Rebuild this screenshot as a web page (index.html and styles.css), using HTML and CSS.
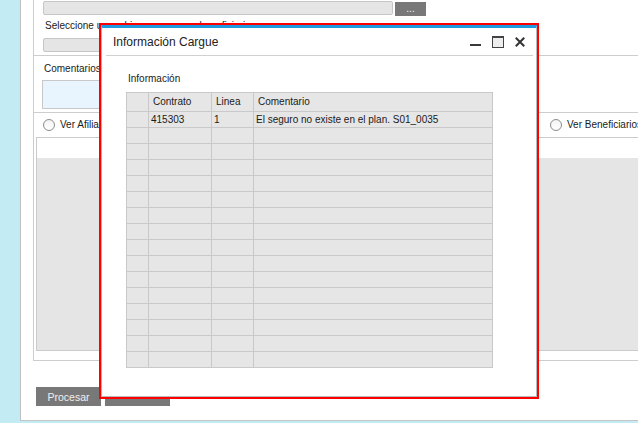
FILE: index.html
```html
<!DOCTYPE html>
<html lang="es">
<head>
<meta charset="utf-8">
<title>Información Cargue</title>
<link rel="stylesheet" href="styles.css">
</head>
<body>
<div class="desktop">
  <div class="window">
    <div class="panel">
      <div class="sec sec-file">
        <div class="file-row">
          <div class="field field-1"></div>
          <button class="btn-dots">...</button>
        </div>
        <div class="lbl lbl-sel">Seleccione un archivo para cargar beneficiarios:</div>
        <div class="field field-2"></div>
      </div>
      <div class="sec sec-com">
        <div class="lbl">Comentarios:</div>
        <div class="textarea"></div>
      </div>
      <div class="sec-radio">
        <label class="radio radio-first"><span class="dot"></span>Ver Afiliados</label>
        <label class="radio"><span class="dot"></span>Ver Beneficiarios</label>
      </div>
      <div class="grid-box">
        <div class="grid-head"></div>
        <div class="grid-body"></div>
      </div>
    </div>
    <div class="actions">
      <button class="btn">Procesar</button>
      <button class="btn" aria-label="Cancelar"></button>
    </div>
  </div>
</div>

<div class="dialog">
  <div class="dlg-title">
    <span class="dlg-title-text">Información Cargue</span>
    <div class="dlg-controls">
      <svg width="12" height="12" viewBox="0 0 12 12"><rect x="0" y="8" width="11" height="2" fill="#3a3a3a"/></svg>
      <svg width="12" height="12" viewBox="0 0 12 12"><rect x="0.5" y="0.5" width="11" height="11" fill="#eeeeee" stroke="#444"/><rect x="0" y="0" width="12" height="2" fill="#444"/></svg>
      <svg width="12" height="12" viewBox="0 0 12 12"><path d="M2.5 2.5 L9.5 9.5 M9.5 2.5 L2.5 9.5" stroke="#333" stroke-width="2" stroke-linecap="square"/></svg>
    </div>
  </div>
  <div class="dlg-sep"></div>
  <div class="dlg-body">
    <div class="dlg-label">Información</div>
    <div class="tbl">
      <div class="th"></div><div class="th">Contrato</div><div class="th">Linea</div><div class="th">Comentario</div>
      <div class="td"></div><div class="td">415303</div><div class="td">1</div><div class="td">El seguro no existe en el plan. S01_0035</div>
      <div class="td"></div><div class="td"></div><div class="td"></div><div class="td"></div>
      <div class="td"></div><div class="td"></div><div class="td"></div><div class="td"></div>
      <div class="td"></div><div class="td"></div><div class="td"></div><div class="td"></div>
      <div class="td"></div><div class="td"></div><div class="td"></div><div class="td"></div>
      <div class="td"></div><div class="td"></div><div class="td"></div><div class="td"></div>
      <div class="td"></div><div class="td"></div><div class="td"></div><div class="td"></div>
      <div class="td"></div><div class="td"></div><div class="td"></div><div class="td"></div>
      <div class="td"></div><div class="td"></div><div class="td"></div><div class="td"></div>
      <div class="td"></div><div class="td"></div><div class="td"></div><div class="td"></div>
      <div class="td"></div><div class="td"></div><div class="td"></div><div class="td"></div>
      <div class="td"></div><div class="td"></div><div class="td"></div><div class="td"></div>
      <div class="td"></div><div class="td"></div><div class="td"></div><div class="td"></div>
      <div class="td"></div><div class="td"></div><div class="td"></div><div class="td"></div>
      <div class="td"></div><div class="td"></div><div class="td"></div><div class="td"></div>
      <div class="td"></div><div class="td"></div><div class="td"></div><div class="td"></div>
    </div>
  </div>
</div>
</body>
</html>
```

FILE: styles.css
```css
* { box-sizing: border-box; }

html, body {
  margin: 0;
  padding: 0;
  width: 638px;
  height: 423px;
  overflow: hidden;
  background: #c2ebf3;
  font-family: "Liberation Sans", Arial, sans-serif;
  font-size: 10px;
  color: #1a1a1a;
}

.desktop {
  padding-left: 20px;
}

.window {
  width: 618px;
  height: 421px;
  background: #ffffff;
  border-left: 1px solid #bfbfbf;
  border-bottom: 1px solid #c4c4c4;
  overflow: hidden;
}

.panel {
  margin-left: 12px;
  width: 800px;
  height: 361px;
  border-left: 1px solid #cdcdcd;
  border-bottom: 1px solid #cdcdcd;
}

.sec {
  border-bottom: 1px solid #cdcdcd;
}

.sec-file {
  height: 56px;
  padding-left: 9px;
}

.file-row {
  display: flex;
  align-items: flex-start;
  height: 16px;
}

.field {
  height: 14px;
  background: #e5e5e5;
  border: 1px solid #c6c6c6;
  border-radius: 2px;
}

.field-1 {
  width: 350px;
  margin-top: 1px;
}

.btn-dots {
  margin: 2px 0 0 2px;
  width: 31px;
  height: 14px;
  padding: 0;
  border: none;
  background: #787878;
  color: #f2f2f2;
  font-family: inherit;
  font-size: 10px;
  line-height: 10px;
}

.lbl {
  line-height: 12px;
  height: 12px;
  white-space: nowrap;
}

.lbl-sel {
  margin-top: 4px;
  margin-left: 2px;
}

.field-2 {
  width: 350px;
  margin-top: 6px;
}

.sec-com {
  height: 57px;
  padding: 7px 0 0 10px;
}

.textarea {
  margin: 5px 0 0 -2px;
  width: 400px;
  height: 29px;
  background: #e9f5fe;
  border: 1px solid #c8c8c8;
}

.sec-radio {
  height: 24px;
  display: flex;
  align-items: center;
  padding-left: 9px;
}

.radio {
  display: flex;
  align-items: center;
  line-height: 12px;
  white-space: nowrap;
}

.radio-first {
  width: 507px;
}

.dot {
  width: 12px;
  height: 12px;
  border-radius: 50%;
  border: 1px solid #8c8c8c;
  background: linear-gradient(#f4f4f4, #ffffff);
  margin-right: 5px;
  flex: none;
}

.grid-box {
  margin-left: 2px;
  height: 214px;
  border: 1px solid #cbcbcb;
  display: flex;
  flex-direction: column;
}

.grid-head {
  height: 20px;
  background: #ffffff;
}

.grid-body {
  flex: 1;
  background: #e5e5e5;
}

.actions {
  display: flex;
  gap: 4px;
  margin: 26px 0 0 15px;
}

.btn {
  width: 65px;
  height: 19px;
  padding: 0;
  border: none;
  background: #787878;
  color: #f0f0f0;
  font-family: inherit;
  font-size: 10.5px;
}

/* Dialog overlay */
.dialog {
  position: absolute;
  left: 101px;
  top: 25px;
  width: 436px;
  height: 372px;
  background: #ffffff;
  border: 1px solid #b9b9b9;
  border-top: 3px solid #1d9ae0;
  outline: 2px solid #ff0000;
}

.dlg-title {
  height: 27px;
  display: flex;
  align-items: center;
  padding: 0 10px 0 11px;
}

.dlg-title-text {
  font-size: 12px;
  color: #222;
}

.dlg-controls {
  margin-left: auto;
  display: flex;
  gap: 10px;
  align-items: center;
}

.dlg-controls svg {
  display: block;
}

.dlg-sep {
  height: 1px;
  margin: 0 3px 0 4px;
  background: #d0d0d0;
}

.dlg-body {
  padding: 17px 0 0 24px;
}

.dlg-label {
  margin-left: 2px;
  line-height: 12px;
  height: 12px;
}

.tbl {
  margin-top: 7px;
  display: grid;
  grid-template-columns: 21px 62px 41px 238px;
  grid-template-rows: 18px repeat(16, 15px);
  gap: 1px;
  padding: 1px;
  width: 367px;
  background: #c9c9c9;
}

.th, .td {
  background: #e6e6e6;
  white-space: nowrap;
  overflow: hidden;
}

.th {
  line-height: 18px;
  padding-left: 4px;
}

.td {
  line-height: 15px;
  padding-left: 2px;
}
```
